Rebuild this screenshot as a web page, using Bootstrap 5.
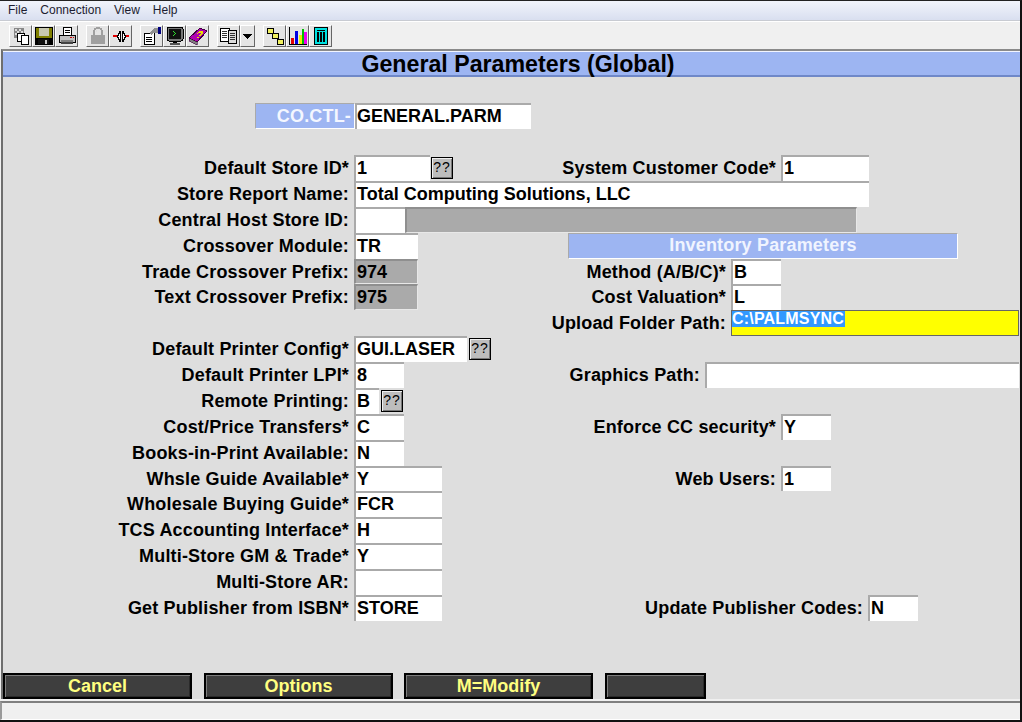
<!DOCTYPE html>
<html lang="en">
<head>
    <meta charset="UTF-8">
    <meta name="viewport" content="width=device-width, initial-scale=1.0">
    <title>General Parameters (Global)</title>
    <link href="https://cdn.jsdelivr.net/npm/bootstrap@5.3.0/dist/css/bootstrap.min.css" rel="stylesheet">
    <style>
        html, body { height: 722px; overflow: hidden; }
        body { background: #f0f0f0; font-family: "Liberation Sans", Arial, sans-serif; color: #000; }
        .app-win { width: 1022px; height: 722px; border-top: 1px solid #222; border-right: 2px solid #111; border-bottom: 2px solid #111; }
        .menu-strip { height: 20px; padding-left: 8px; gap: 13px; font-size: 12px; background: linear-gradient(#f1f4fb, #d9dff0); border-bottom: 1px solid #c8cbd2; }
        .menu-strip span { line-height: 19px; color: #1c1c30; }
        .tool-strip { height: 28px; padding: 3px 0 0 9px; background: #f0f0f0; border-top: 1px solid #fff; }
        .tool-group { margin-right: 8px; }
        .tool-btn { width: 23px; height: 22px; background: #e4e4e4; border: 1px solid; border-color: #fff #666 #666 #fff; padding: 0; display: flex; align-items: center; justify-content: center; }
        .tool-btn svg { display: block; width: 18px; height: 18px; shape-rendering: crispEdges; }
        .tool-drop { width: 15px; }
        .tool-drop svg { width: 9px; height: 5px; }
        .form-area { background: #dedede; border-left: 2px solid #6e6e6e; border-top: 2px solid #8a8a8a; margin-left: 1px; }
        .page-title { height: 26px; padding-left: 13px; background: #9db5f2; border-top: 1px solid #f2f5ff; border-bottom: 2px solid #6f88c8; font-size: 23.2px; font-weight: 700; line-height: 24px; text-align: center; }
        .form-body { padding-top: 26px; }
        .form-line { height: 25.88px; font-size: 18px; font-weight: 700; line-height: 26px; }
        .first-line { height: 26px; margin-bottom: 26px; }
        .lbl-left, .lbl-right { padding-right: 5px; text-align: right; white-space: nowrap; flex: none; letter-spacing: .17px; }
        .lbl-left { width: 351px; }
        .lbl-sys { width: 328px; }
        .lbl-inv { width: 313px; }
        .lbl-upload { width: 728px; }
        .lbl-graphics { width: 301px; }
        .lbl-enforce { width: 377px; }
        .lbl-web { width: 339px; }
        .lbl-update { width: 426px; }
        .fld { height: 100%; background: #fff; border-top: 2px solid #aaa; border-left: 2px solid #aaa; padding: 0 0 0 1px; line-height: 22px; white-space: nowrap; overflow: hidden; flex: none; }
        .fld-co { padding-left: 0; }
        .fld-ro { background: #aaa; border-color: #8f8f8f; border-bottom: 1px solid #e8e8e8; border-right: 1px solid #e8e8e8; }
        .fld-sel { background: #ff0; border: 1px solid #666; padding: 0; font-size: 16px; letter-spacing: .2px; line-height: 16px; }
        .fld-sel span { display: inline-block; height: 16px; background: #3399ff; color: #fff; padding: 0 1px 0 0; }
        .sz-25 { width: 25px; } .sz-50 { width: 50px; } .sz-51 { width: 51px; } .sz-64 { width: 64px; } .sz-76 { width: 76px; } .sz-88 { width: 88px; }
        .sz-113 { width: 113px; } .sz-176 { width: 176px; } .sz-288 { width: 288px; } .sz-314 { width: 314px; } .sz-452 { width: 452px; } .sz-515 { width: 515px; }
        .co-tag { width: 100px; height: 26px; margin-left: 252px; background: #9db5f2; border: 1px solid; border-color: #aaa #fff #fff #aaa; color: #f4f7ff; text-align: right; padding-right: 3px; line-height: 24px; letter-spacing: .17px; flex: none; }
        .inv-head { width: 390px; height: 26px; margin-left: 150px; background: #9db5f2; border: 1px solid; border-color: #aaa #fff #fff #aaa; color: #f0f4ff; text-align: center; line-height: 23px; letter-spacing: .17px; flex: none; }
        .qq-btn { width: 22px; height: 22px; margin: 2px 0 0 1px; padding: 0; background: #bdbdbd; border: 1px solid #000; box-shadow: inset 1px 1px 0 #f0f0f0, inset -1px -1px 0 #777; font-size: 14px; line-height: 18px; font-weight: 400; text-align: center; letter-spacing: 1px; flex: none; }
        .qq-far { margin-left: 2px; }
        .cmd-strip { gap: 12px; }
        .cmd-btn { height: 26px; border: 2px solid #000; border-radius: 0; padding: 0; background: #3e3e3e; box-shadow: inset 1px 1px 0 #7c7c7c, inset -1px -1px 0 #2a2a2a; color: #ffff80; font-size: 18px; font-weight: 700; line-height: 22px; }
        .cmd-btn:hover { background: #3e3e3e; color: #ffff80; border-color: #000; }
        .cmd-w { width: 189px; } .cmd-short { width: 101px; }
        .cmd-tight { margin-left: -1px; }
        .status-strip { height: 19px; margin-top: 2px; background: #f0f0f0; border-top: 2px solid #808080; border-left: 2px solid #9a9a9a; border-bottom: 1px solid #fff; }
    </style>
</head>
<body class="m-0">
    <div class="app-win d-flex flex-column">
        <!-- Menu -->
        <div class="menu-strip d-flex">
            <span>File</span><span>Connection</span><span>View</span><span>Help</span>
        </div>
        <!-- Toolbar -->
        <div class="tool-strip d-flex">
            <div class="tool-group d-flex">
                <div class="tool-btn"><svg viewBox="0 0 18 18"><rect x="2" y="1" width="10" height="10" fill="#888"/><path d="M3 2h2v2H3zM7 2h2v2H7zM5 4h2v2H5zM9 4h2v2H9zM3 6h2v2H3zM7 6h2v2H7z" fill="#ddd"/><rect x="5" y="6" width="7" height="8" fill="#fff" stroke="#000"/><rect x="9.500" y="8.500" width="7" height="9" fill="#fff" stroke="#000"/></svg></div>
                <div class="tool-btn"><svg viewBox="0 0 18 18"><rect x="0" y="0" width="18" height="18" fill="#000"/><rect x="1" y="1" width="16" height="10" fill="#808000"/><rect x="4" y="1" width="10" height="8" fill="#c8c8b0"/><rect x="3" y="12" width="11" height="5" fill="#111"/><rect x="10" y="13" width="2" height="4" fill="#c8c8c8"/></svg></div>
                <div class="tool-btn"><svg viewBox="0 0 18 18"><rect x="5.500" y="0.500" width="8" height="8" fill="#fff" stroke="#000"/><path d="M7 3h5v1H7zM7 5h5v1H7z" fill="#000"/><path d="M1 8h16v7H1z" fill="#c0c0c0" stroke="#000"/><rect x="3" y="13" width="12" height="2" fill="#808080"/><path d="M12 10h2v1h-2zM15 10h1v1h-1z" fill="#c00"/><rect x="3" y="15" width="12" height="2" fill="#444"/></svg></div>
            </div>
            <div class="tool-group d-flex">
                <div class="tool-btn"><svg viewBox="0 0 18 18"><path d="M5 8V5a4 4 0 0 1 8 0v3" fill="none" stroke="#a0a0a0" stroke-width="2"/><rect x="2" y="8" width="14" height="9" fill="#a0a0a0"/><rect x="7" y="3" width="1" height="2" fill="#ddd"/></svg></div>
                <div class="tool-btn"><svg viewBox="0 0 18 18"><path d="M5 8h1V6h1V4h1v10H7v-2H6v-2H5zM10 4h1v2h1v2h1v2h-1v2h-1v2h-1z" fill="#fff" stroke="#000"/><rect x="1" y="8" width="4" height="2" fill="#e00000"/><rect x="14" y="8" width="3" height="2" fill="#e00000"/></svg></div>
            </div>
            <div class="tool-group d-flex">
                <div class="tool-btn"><svg viewBox="0 0 18 18"><path d="M1 6h6l4-3v14H1z" fill="#fff" stroke="#000"/><path d="M3 10h6v1H3zM3 12h6v1H3zM3 14h6v1H3z" fill="#000"/><path d="M7 5l5-4h3v5h-4l-3 2z" fill="#909090"/><rect x="15" y="0" width="3" height="7" fill="#000080"/></svg></div>
                <div class="tool-btn"><svg viewBox="0 0 18 18"><rect x="1" y="0" width="16" height="14" rx="2" fill="#777" stroke="#000"/><rect x="3" y="2" width="12" height="10" fill="#101010"/><path d="M7 4h1v1h1v1h1v1H9v1H8v1H7V8h1V7h1V6H8V5H7z" fill="#30e030"/><rect x="7" y="14" width="4" height="2" fill="#000"/><rect x="4" y="16" width="10" height="2" fill="#555"/></svg></div>
                <div class="tool-btn"><svg viewBox="0 0 18 18"><path d="M0 11L11 1l7 3-10 11z" fill="#b000b0" stroke="#400040"/><path d="M0 11l8 4v3l-8-4z" fill="#808080" stroke="#400040" stroke-width=".6"/><path d="M8 7l2-2h3v2l-3 2" fill="none" stroke="#e8e000" stroke-width="1.400"/><rect x="8" y="10" width="2" height="1" fill="#e8e000"/></svg></div>
            </div>
            <div class="tool-group d-flex">
                <div class="tool-btn"><svg viewBox="0 0 18 18"><rect x="0.500" y="1.500" width="9" height="13" fill="#fff" stroke="#000"/><rect x="8.500" y="3.500" width="8" height="13" fill="#ddd" stroke="#000"/><path d="M2 4h5v1H2zM2 6h5v1H2zM2 8h5v1H2zM2 10h5v1H2zM10 6h5v1h-5zM10 8h5v1h-5zM10 10h5v1h-5zM10 12h5v1h-5z" fill="#333"/></svg></div>
                <div class="tool-btn tool-drop"><svg viewBox="0 0 9 5"><path d="M0 0h9L4.500 5z" fill="#000"/></svg></div>
            </div>
            <div class="tool-group d-flex">
                <div class="tool-btn"><svg viewBox="0 0 18 18"><path d="M5 5l5 5 4 4" stroke="#000" fill="none"/><rect x="1.500" y="1.500" width="6" height="5" fill="#f0f060" stroke="#000"/><rect x="6.500" y="6.500" width="6" height="5" fill="#f0f060" stroke="#000"/><rect x="11.500" y="12.500" width="6" height="5" fill="#f0f060" stroke="#000"/></svg></div>
                <div class="tool-btn"><svg viewBox="0 0 18 18"><path d="M0 0h1v17h17v1H0z" fill="#000"/><rect x="2" y="11" width="3" height="6" fill="#e00000"/><rect x="6" y="4" width="3" height="13" fill="#0000e0"/><rect x="10" y="8" width="3" height="9" fill="#f0f000"/><rect x="13" y="2" width="2" height="15" fill="#00c000"/><rect x="15" y="5" width="3" height="12" fill="#f000f0"/></svg></div>
                <div class="tool-btn"><svg viewBox="0 0 18 18"><rect x="2" y="0" width="14" height="18" fill="#000"/><rect x="3" y="1" width="12" height="16" fill="#00e0e0"/><rect x="5" y="3" width="8" height="1" fill="#000"/><rect x="5" y="5" width="2" height="10" fill="#000"/><rect x="8" y="5" width="2" height="10" fill="#000"/><rect x="11" y="5" width="2" height="10" fill="#000"/></svg></div>
            </div>
        </div>

        <!-- Main form -->
        <div class="form-area flex-grow-1 d-flex flex-column">
            <div class="page-title">General Parameters (Global)</div>
            <div class="form-body flex-grow-1">
                <div class="form-line first-line d-flex">
                    <div class="co-tag">CO.CTL-</div><div class="fld fld-co sz-176">GENERAL.PARM</div>
                </div>
                <div class="form-line d-flex">
                    <div class="lbl-left">Default Store ID*</div><div class="fld sz-76">1</div><div class="qq-btn">??</div>
                    <div class="lbl-right lbl-sys">System Customer Code*</div><div class="fld sz-88">1</div>
                </div>
                <div class="form-line d-flex">
                    <div class="lbl-left">Store Report Name:</div><div class="fld sz-515">Total Computing Solutions, LLC</div>
                </div>
                <div class="form-line d-flex">
                    <div class="lbl-left">Central Host Store ID:</div><div class="fld sz-51"></div><div class="fld fld-ro sz-452"></div>
                </div>
                <div class="form-line d-flex">
                    <div class="lbl-left">Crossover Module:</div><div class="fld sz-64">TR</div>
                    <div class="inv-head">Inventory Parameters</div>
                </div>
                <div class="form-line d-flex">
                    <div class="lbl-left">Trade Crossover Prefix:</div><div class="fld fld-ro sz-64">974</div>
                    <div class="lbl-right lbl-inv">Method (A/B/C)*</div><div class="fld sz-50">B</div>
                </div>
                <div class="form-line d-flex">
                    <div class="lbl-left">Text Crossover Prefix:</div><div class="fld fld-ro sz-64">975</div>
                    <div class="lbl-right lbl-inv">Cost Valuation*</div><div class="fld sz-50">L</div>
                </div>
                <div class="form-line d-flex">
                    <div class="lbl-right lbl-upload">Upload Folder Path:</div><div class="fld fld-sel sz-288"><span>C:\PALMSYNC</span></div>
                </div>
                <div class="form-line d-flex">
                    <div class="lbl-left">Default Printer Config*</div><div class="fld sz-113">GUI.LASER</div><div class="qq-btn qq-far">??</div>
                </div>
                <div class="form-line d-flex">
                    <div class="lbl-left">Default Printer LPI*</div><div class="fld sz-50">8</div>
                    <div class="lbl-right lbl-graphics">Graphics Path:</div><div class="fld sz-314"></div>
                </div>
                <div class="form-line d-flex">
                    <div class="lbl-left">Remote Printing:</div><div class="fld sz-25">B</div><div class="qq-btn qq-far">??</div>
                </div>
                <div class="form-line d-flex">
                    <div class="lbl-left">Cost/Price Transfers*</div><div class="fld sz-50">C</div>
                    <div class="lbl-right lbl-enforce">Enforce CC security*</div><div class="fld sz-50">Y</div>
                </div>
                <div class="form-line d-flex">
                    <div class="lbl-left">Books-in-Print Available:</div><div class="fld sz-50">N</div>
                </div>
                <div class="form-line d-flex">
                    <div class="lbl-left">Whsle Guide Available*</div><div class="fld sz-88">Y</div>
                    <div class="lbl-right lbl-web">Web Users:</div><div class="fld sz-50">1</div>
                </div>
                <div class="form-line d-flex">
                    <div class="lbl-left">Wholesale Buying Guide*</div><div class="fld sz-88">FCR</div>
                </div>
                <div class="form-line d-flex">
                    <div class="lbl-left">TCS Accounting Interface*</div><div class="fld sz-88">H</div>
                </div>
                <div class="form-line d-flex">
                    <div class="lbl-left">Multi-Store GM &amp; Trade*</div><div class="fld sz-88">Y</div>
                </div>
                <div class="form-line d-flex">
                    <div class="lbl-left">Multi-Store AR:</div><div class="fld sz-88"></div>
                </div>
                <div class="form-line d-flex">
                    <div class="lbl-left">Get Publisher from ISBN*</div><div class="fld sz-88">STORE</div>
                    <div class="lbl-right lbl-update">Update Publisher Codes:</div><div class="fld sz-50">N</div>
                </div>
            </div>
            <div class="cmd-strip d-flex">
                <button type="button" class="btn cmd-btn cmd-w">Cancel</button>
                <button type="button" class="btn cmd-btn cmd-w">Options</button>
                <button type="button" class="btn cmd-btn cmd-w cmd-tight">M=Modify</button>
                <button type="button" class="btn cmd-btn cmd-short">&nbsp;</button>
            </div>
        </div>
        <div class="status-strip"></div>
    </div>
    <script src="https://cdn.jsdelivr.net/npm/bootstrap@5.3.0/dist/js/bootstrap.bundle.min.js"></script>
</body>
</html>
